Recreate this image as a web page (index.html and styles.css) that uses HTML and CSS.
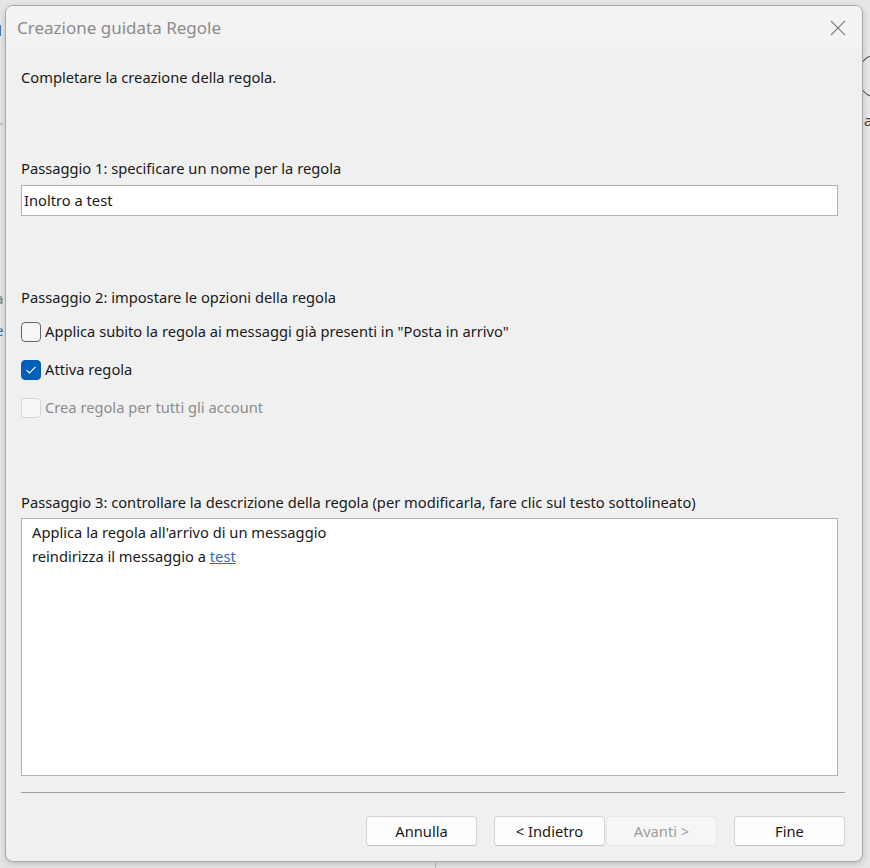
FILE: index.html
```html
<!DOCTYPE html>
<html lang="it">
<head>
    <meta charset="UTF-8">
    <title>Creazione guidata Regole</title>
    <link rel="stylesheet" href="styles.css">
</head>
<body>
    <div class="desktop">
        <span class="peek peek-l1">l</span>
        <span class="peek peek-l2">r</span>
        <span class="peek peek-l3">a</span>
        <span class="peek peek-l4">e</span>
        <span class="peek peek-r1"></span>
        <span class="peek peek-r2">a</span>
        <span class="peek peek-line"></span>

        <div class="window">
            <div class="titlebar">
                <span class="title">Creazione guidata Regole</span>
                <svg class="close" width="18" height="18" viewBox="0 0 18 18">
                    <path d="M1 1 L17 17 M17 1 L1 17" stroke="#7a7a7a" stroke-width="1.3" fill="none"/>
                </svg>
            </div>

            <div class="content">
                <p class="intro">Completare la creazione della regola.</p>

                <div class="step step-1">
                    <label class="step-label">Passaggio 1: specificare un nome per la regola</label>
                    <div class="textbox">Inoltro a test</div>
                </div>

                <div class="step step-2">
                    <label class="step-label">Passaggio 2: impostare le opzioni della regola</label>
                    <div class="options">
                        <div class="check-row">
                            <span class="box"></span>
                            <span>Applica subito la regola ai messaggi già presenti in "Posta in arrivo"</span>
                        </div>
                        <div class="check-row">
                            <span class="box checked">
                                <svg width="12" height="10" viewBox="0 0 12 10">
                                    <path d="M1.5 5.2 L4.5 8 L10.5 1.8" stroke="#fff" stroke-width="1.1" fill="none"/>
                                </svg>
                            </span>
                            <span>Attiva regola</span>
                        </div>
                        <div class="check-row disabled">
                            <span class="box"></span>
                            <span>Crea regola per tutti gli account</span>
                        </div>
                    </div>
                </div>

                <div class="step step-3">
                    <label class="step-label">Passaggio 3: controllare la descrizione della regola (per modificarla, fare clic sul testo sottolineato)</label>
                    <div class="description">
                        <div>Applica la regola all'arrivo di un messaggio</div>
                        <div>reindirizza il messaggio a <a href="#">test</a></div>
                    </div>
                </div>
            </div>

            <div class="footer">
                <button class="btn">Annulla</button>
                <div class="btn-pair">
                    <button class="btn">&lt; Indietro</button>
                    <button class="btn" disabled>Avanti &gt;</button>
                </div>
                <button class="btn">Fine</button>
            </div>
        </div>
    </div>
</body>
</html>
```

FILE: styles.css
```css
body {
    margin: 0;
    background: #e6e6e6;
    font-family: "Noto Sans", "Open Sans", sans-serif;
    color: #1a1a1a;
}

.desktop {
    position: relative;
    width: 870px;
    height: 868px;
    padding: 5px 0 0 5px;
    box-sizing: border-box;
    overflow: hidden;
}

/* bits of the app behind the dialog */
.peek {
    position: absolute;
    font-size: 15px;
    color: #555;
}
.peek-l1 { left: -2px; top: 20px; color: #333; }
.peek-l2 { left: -3px; top: 115px; color: #aaa; }
.peek-l3 { left: -5px; top: 288px; color: #777; }
.peek-l4 { left: -5px; top: 320px; color: #2f6cb5; }
.peek-r1 {
    left: 858px;
    top: 55px;
    width: 30px;
    height: 40px;
    border: 1.5px solid #444;
    border-radius: 50%;
}
.peek-r2 { left: 864px; top: 110px; color: #444; }
.peek-line {
    left: 435px;
    top: 850px;
    width: 1px;
    height: 20px;
    background: #bbb;
}

.window {
    position: relative;
    width: 858px;
    height: 857px;
    background: #f0f0f0;
    border: 1px solid #a9a9a9;
    border-radius: 8px;
    box-sizing: border-box;
    box-shadow: 0 2px 6px rgba(0, 0, 0, 0.18);
    display: flex;
    flex-direction: column;
    overflow: hidden;
}

.titlebar {
    height: 43px;
    flex-shrink: 0;
    background: #f3f3f3;
    display: flex;
    align-items: center;
    justify-content: space-between;
    padding: 0 16px 0 11px;
}

.title {
    font-size: 17px;
    color: #8b8b8b;
}

.close {
    width: 16px;
    height: 16px;
}

.content {
    flex: 1;
    padding: 0 24px 0 15px;
    font-size: 14.7px;
}

.intro {
    margin: 18px 0 0;
    line-height: 20px;
}

.step-label {
    display: block;
    line-height: 20px;
}

.step-1 {
    margin-top: 71px;
}

.textbox {
    margin-top: 7px;
    height: 31px;
    box-sizing: border-box;
    background: #fff;
    border: 1px solid #b1b1b1;
    padding: 4px 2px;
    line-height: 21px;
}

.step-2 {
    margin-top: 71px;
}

.options {
    display: flex;
    flex-direction: column;
    gap: 17px;
    margin-top: 14px;
}

.check-row {
    display: flex;
    align-items: center;
    gap: 4px;
    line-height: 21px;
}

.box {
    width: 20px;
    height: 20px;
    box-sizing: border-box;
    border: 1px solid #666;
    border-radius: 4px;
    background: #f6f6f6;
    display: flex;
    align-items: center;
    justify-content: center;
}

.box.checked {
    background: #005fb8;
    border-color: #005fb8;
}

.disabled {
    color: #8c8c8c;
}

.disabled .box {
    border-color: #d6d6d6;
    background: #f7f7f7;
}

.step-3 {
    margin-top: 74px;
}

.description {
    margin-top: 6px;
    height: 258px;
    box-sizing: border-box;
    background: #fff;
    border: 1px solid #b1b1b1;
    padding: 1px 10px;
    line-height: 24px;
}

.description a {
    color: #2f6cb5;
}

.footer {
    margin: 0 17px 15px 15px;
    border-top: 1px solid #a0a0a0;
    padding-top: 23px;
    display: flex;
    justify-content: flex-end;
    gap: 17px;
}

.btn-pair {
    display: flex;
    gap: 1px;
}

.btn {
    width: 111px;
    height: 30px;
    font-family: inherit;
    font-size: 14.7px;
    color: #1a1a1a;
    background: #fdfdfd;
    border: 1px solid #d4d4d4;
    border-bottom-color: #c0c0c0;
    border-radius: 4px;
    padding: 0;
}

.btn:disabled {
    background: #f6f6f6;
    border-color: #e6e6e6;
    color: #9d9d9d;
}
```
